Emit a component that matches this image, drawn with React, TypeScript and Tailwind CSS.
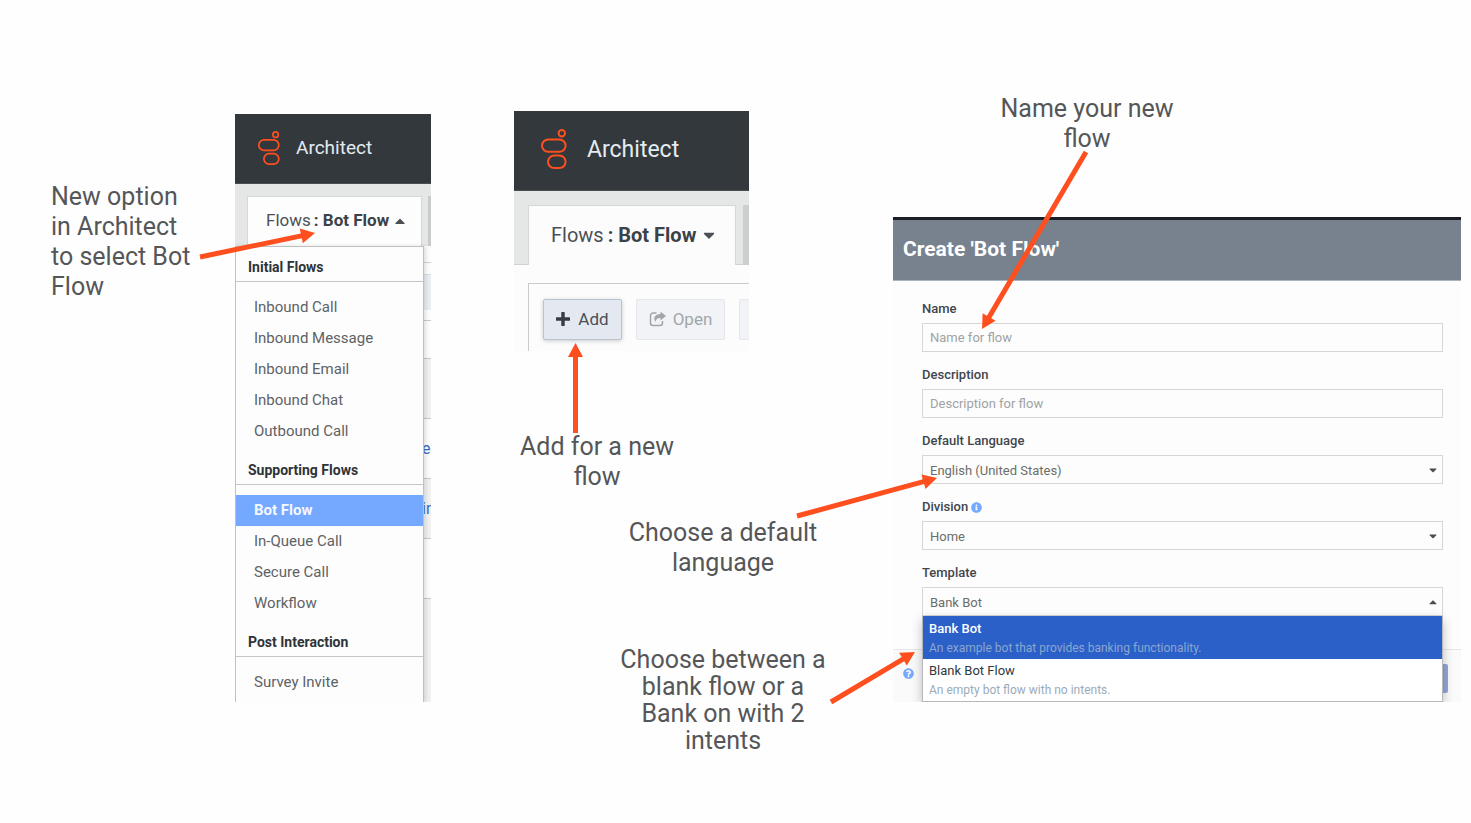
import React from "react";
import { FaInfoCircle, FaQuestionCircle, FaCaretDown, FaCaretUp } from "react-icons/fa";

type MenuSection = { title: string; items: string[] };

const sections: MenuSection[] = [
  {
    title: "Initial Flows",
    items: ["Inbound Call", "Inbound Message", "Inbound Email", "Inbound Chat", "Outbound Call"],
  },
  { title: "Supporting Flows", items: ["Bot Flow", "In-Queue Call", "Secure Call", "Workflow"] },
  { title: "Post Interaction", items: ["Survey Invite"] },
];

const templates = [
  { name: "Bank Bot", text: "An example bot that provides banking functionality.", selected: true },
  { name: "Blank Bot Flow", text: "An empty bot flow with no intents.", selected: false },
];

function Logo({ className }: { className: string }) {
  return (
    <svg viewBox="0 0 26 40" className={className} fill="none" stroke="#ff4f1f" strokeWidth="2" aria-hidden="true">
      <circle cx="20.8" cy="4.2" r="3.2" />
      <rect x="1" y="10.4" width="23.6" height="12.4" rx="6.2" />
      <rect x="7" y="26.6" width="17.6" height="12.4" rx="6.2" />
    </svg>
  );
}

function Arrow({ from, to }: { from: [number, number]; to: [number, number] }) {
  const length = Math.hypot(to[0] - from[0], to[1] - from[1]);
  const angle = (Math.atan2(to[1] - from[1], to[0] - from[0]) * 180) / Math.PI;
  const neck = length - 14;
  return (
    <polygon
      fill="#ff4f1f"
      transform={`translate(${from[0]} ${from[1]}) rotate(${angle})`}
      points={`0,-2.5 ${neck},-2.5 ${neck},-7.5 ${length},0 ${neck},7.5 ${neck},2.5 0,2.5`}
    />
  );
}

function Arrows() {
  return (
    <svg className="pointer-events-none absolute left-0 top-0 z-20 h-[823px] w-[1200px]" viewBox="0 0 1200 823" aria-hidden="true">
      <Arrow from={[200, 257]} to={[315, 233]} />
      <Arrow from={[575.5, 433]} to={[575.5, 343]} />
      <Arrow from={[797, 516]} to={[937, 478]} />
      <Arrow from={[831, 702]} to={[915, 652]} />
      <Arrow from={[1086, 152]} to={[982, 329]} />
    </svg>
  );
}

function FlowMenu() {
  return (
    <nav className="absolute left-0 top-[132px] z-10 h-[456px] w-[189px] overflow-hidden border border-b-0 border-[#bfc1c1] bg-[#fdfdfd] shadow-[2px_0_4px_rgba(0,0,0,0.12)]">
      {sections.map((section, i) => (
        <section key={section.title} className={i > 0 ? "mt-[3px]" : ""}>
          <h2 className="flex h-[35px] items-end border-b border-[#c4c6c6] pb-1 pl-3 text-[14px] font-bold leading-5 text-[#2e3338]">
            {section.title}
          </h2>
          <ul className="pt-[10px]">
            {section.items.map((item) => (
              <li key={item}>
                <a
                  href="#flows"
                  className={
                    item === "Bot Flow"
                      ? "flex h-[31px] items-center bg-[#75a8ff] pl-[18px] text-[15px] font-bold text-[#f4f8ff]"
                      : "flex h-[31px] items-center pl-[18px] text-[15px] text-[#5d6266]"
                  }
                >
                  {item}
                </a>
              </li>
            ))}
          </ul>
        </section>
      ))}
    </nav>
  );
}

function MenuPanel() {
  return (
    <section className="relative mt-[114px] flex h-[588px] w-[196px] shrink-0 flex-col overflow-hidden bg-[#fdfdfd]">
      <header className="flex h-[70px] shrink-0 items-center border-b border-[#4b4f52] bg-[#33383d] pl-[23px] text-[19px] text-[#e4ebf0]">
        <Logo className="mb-0.5 h-[34px] w-[22px]" />
        <span className="pl-4">Architect</span>
      </header>
      <div className="flex h-[62px] shrink-0 items-end justify-between bg-[#e5e7e7] pl-3">
        <button className="flex h-[50px] w-[175px] items-center gap-[3px] border border-b-0 border-[#d5d8d8] bg-[#fdfdfd] pb-0.5 pl-[18px] text-[17px] text-[#4a5056]">
          Flows <b className="font-bold text-[#3b4248]">: Bot Flow</b>
          <FaCaretUp className="size-4" />
        </button>
        <span className="h-[50px] w-[3px] bg-[#c9cbcb]" />
      </div>
      <div className="flex flex-col items-end text-[16px] text-[#3c6ac8]">
        <div className="h-[17px] w-full border-b border-[#d0d2d2]" />
        <div className="h-3 w-full border-b border-[#dcdede]" />
        <div className="h-[35px] w-full bg-[#eaedf2]" />
        <div className="h-[11px] w-full border-b border-[#c9cbcb]" />
        <div className="h-[38px] w-full border-b border-[#c9cbcb]" />
        <div className="h-[60px] w-full border-b border-[#c9cbcb] bg-[#f1f1f1]" />
        <div className="flex h-[60px] w-full items-center border-b border-[#c9cbcb] pl-[187px]">e</div>
        <div className="flex h-[60px] w-full items-center border-b border-[#c9cbcb] bg-[#f1f1f1] pl-[187px]">in</div>
        <div className="h-[60px] w-full border-b border-[#c9cbcb]" />
        <div className="h-[110px] w-full bg-[#f1f1f1]" />
      </div>
      <FlowMenu />
    </section>
  );
}

function AddPanel() {
  return (
    <section className="flex h-[240px] w-[235px] flex-col overflow-hidden bg-[#fcfcfd]">
      <header className="flex h-20 shrink-0 items-center border-b border-[#4b4f52] bg-[#33383d] pl-[27px] text-[23px] text-[#e4ebf0]">
        <Logo className="mb-1 h-10 w-[26px]" />
        <span className="pl-5">Architect</span>
      </header>
      <div className="flex h-[74px] shrink-0 items-end bg-[#e5e7e7]">
        <span className="w-[14px] border-b border-[#cfd2d2]" />
        <button className="flex h-[60px] w-[208px] items-center gap-1 border border-b-0 border-[#d5d8d8] bg-[#fcfcfd] pb-0.5 pl-[22px] text-[20px] text-[#4a5056]">
          Flows <b className="font-bold text-[#3b4248]">: Bot Flow</b>
          <FaCaretDown className="size-[18px]" />
        </button>
        <span className="w-[7px] border-b border-[#cfd2d2]" />
        <span className="h-[60px] flex-1 bg-[#cdcfcf]" />
      </div>
      <div className="ml-[14px] mt-[18px] flex flex-1 gap-[14px] border-l border-t border-[#c9cbcb] pl-[14px] pt-[15px] text-[17px]">
        <button className="flex h-[41px] w-[79px] shrink-0 items-center justify-center gap-2 rounded-xs border border-[#b9c2d1] bg-[#e4e9f1] text-[#4a5056] shadow-[0_1px_4px_rgba(0,0,0,0.2)]">
          <svg viewBox="0 0 14 14" className="mb-0.5 size-3.5" aria-hidden="true">
            <path d="M7 1v12M1 7h12" stroke="#363c42" strokeWidth="3.4" strokeLinecap="round" />
          </svg>
          Add
        </button>
        <button disabled className="flex h-[41px] w-[89px] shrink-0 items-center justify-center gap-1.5 rounded-xs border border-[#e4e7ec] bg-[#f1f3f7] text-[#a2a6a9]">
          <svg viewBox="0 0 18 16" className="mb-0.5 h-4 w-[18px]" fill="none" aria-hidden="true">
            <path d="M7.500 2H4A2.500 2.500 0 0 0 1.500 4.500v7.500A2.500 2.500 0 0 0 4 14.500h7a2.500 2.500 0 0 0 2.500-2.500v-2" stroke="currentColor" strokeWidth="1.500" />
            <path d="M11.500 0.500 17 5l-5.500 4.500V7C8.500 6.800 7 8 6.500 11 3.800 7 6 3.200 11.500 3z" fill="currentColor" />
          </svg>
          Open
        </button>
        <button disabled aria-label="More" className="h-[41px] w-[89px] shrink-0 rounded-xs border border-[#e4e7ec] bg-[#f1f3f7]" />
      </div>
    </section>
  );
}

const inputClass =
  "h-[29px] w-full rounded-none border border-[#d6d6d6] bg-[#fdfdfd] px-[7px] text-[13px] text-[#6b6e6a] placeholder:text-[#a0a2a3] outline-none";
const selectClass =
  "h-[29px] w-full appearance-none rounded-none border border-[#d6d6d6] bg-[#fdfdfd] px-[7px] pt-0.5 text-[13px] text-[#6b6e6a] outline-none";
const labelClass = "mb-[5px] flex h-[18px] items-center gap-[3px] text-[13px] font-medium text-[#3f464d]";

function SelectField({ id, label, value, info, open }: { id: string; label: string; value: string; info?: boolean; open?: boolean }) {
  const Caret = open ? FaCaretUp : FaCaretDown;
  return (
    <div className="relative">
      <label htmlFor={id} className={labelClass}>
        {label}
        {info && <FaInfoCircle className="size-[11px] text-[#75a8ff]" />}
      </label>
      <div className="relative">
        <select id={id} className={selectClass} defaultValue={value}>
          <option>{value}</option>
        </select>
        <Caret className="pointer-events-none absolute right-1 top-[9px] size-3 text-[#4c4f48]" />
      </div>
      {open && (
        <ul className="absolute inset-x-0 top-full z-10 h-[86px] border border-t-0 border-[#b5b7b9] bg-white shadow-[0_4px_10px_rgba(0,0,0,0.25)]">
          {templates.map((t) => (
            <li
              key={t.name}
              className={t.selected ? "h-[43px] bg-[#2a60c8] px-1.5 pt-[3px] text-white" : "h-[42px] px-1.5 pt-0.5 text-[#33383d]"}
            >
              <p className={t.selected ? "text-[13px] font-medium leading-5" : "text-[13px] leading-5"}>{t.name}</p>
              <p className={t.selected ? "text-[12px] leading-[18px] text-[#8ba6cf]" : "text-[12px] leading-[18px] text-[#9aabba]"}>{t.text}</p>
            </li>
          ))}
        </ul>
      )}
    </div>
  );
}

function CreateDialog() {
  return (
    <section className="mt-[63px] h-[485px] overflow-hidden border-t-[3px] border-[#1b1f23] bg-[#fdfdfd]">
      <header className="flex h-[61px] items-center border-b border-[#a9b4c0] bg-[#77828e] pl-[10px]">
        <h1 className="text-[21px] font-bold text-white">Create 'Bot Flow'</h1>
      </header>
      <form className="flex flex-col gap-[14px] pb-[33px] pl-[29px] pr-[18px] pt-[19px]">
        <div>
          <label htmlFor="name" className={labelClass}>Name</label>
          <input id="name" className={inputClass} placeholder="Name for flow" />
        </div>
        <div>
          <label htmlFor="description" className={labelClass}>Description</label>
          <input id="description" className={inputClass} placeholder="Description for flow" />
        </div>
        <SelectField id="language" label="Default Language" value="English (United States)" />
        <SelectField id="division" label="Division" value="Home" info />
        <SelectField id="template" label="Template" value="Bank Bot" open />
      </form>
      <footer className="flex h-[53px] items-start justify-between border-t border-[#e6e6e6] bg-[#fafafb] pl-[10px] pr-[13px] pt-[14px]">
        <FaQuestionCircle className="mt-1 size-[11px] text-[#75a8ff]" />
        <button aria-label="Create" className="h-[29px] w-20 rounded-xs bg-[#8fa8dc]" />
      </footer>
    </section>
  );
}

export default function App() {
  return (
    <main className="relative flex min-h-screen items-start overflow-hidden bg-[#fefefe] font-['Roboto',sans-serif] text-[#33383d]">
      <p className="w-[235px] shrink-0 pl-[51px] pt-[182px] text-[25px] leading-[30px] text-[#555658]">
        New option
        <br />
        in Architect
        <br />
        to select Bot
        <br />
        Flow
      </p>
      <MenuPanel />
      <div className="ml-[83px] w-[379px] shrink-0 pt-[111px] text-[#555658]">
        <AddPanel />
        <p className="mt-[81px] w-[166px] text-center text-[25px] leading-[30px]">
          Add for a new
          <br />
          flow
        </p>
        <p className="ml-[104px] mt-[26px] w-[210px] text-center text-[25px] leading-[30px]">
          Choose a default
          <br />
          language
        </p>
        <p className="ml-[104px] mt-[68px] w-[210px] text-center text-[25px] leading-[27px]">
          Choose between a
          <br />
          blank flow or a
          <br />
          Bank on with 2
          <br />
          intents
        </p>
      </div>
      <div className="min-w-[480px] flex-1 pr-[10px] pt-[94px]">
        <p className="ml-[94px] w-[200px] text-center text-[25px] leading-[30px] text-[#555658]">
          Name your new
          <br />
          flow
        </p>
        <CreateDialog />
      </div>
      <Arrows />
    </main>
  );
}
